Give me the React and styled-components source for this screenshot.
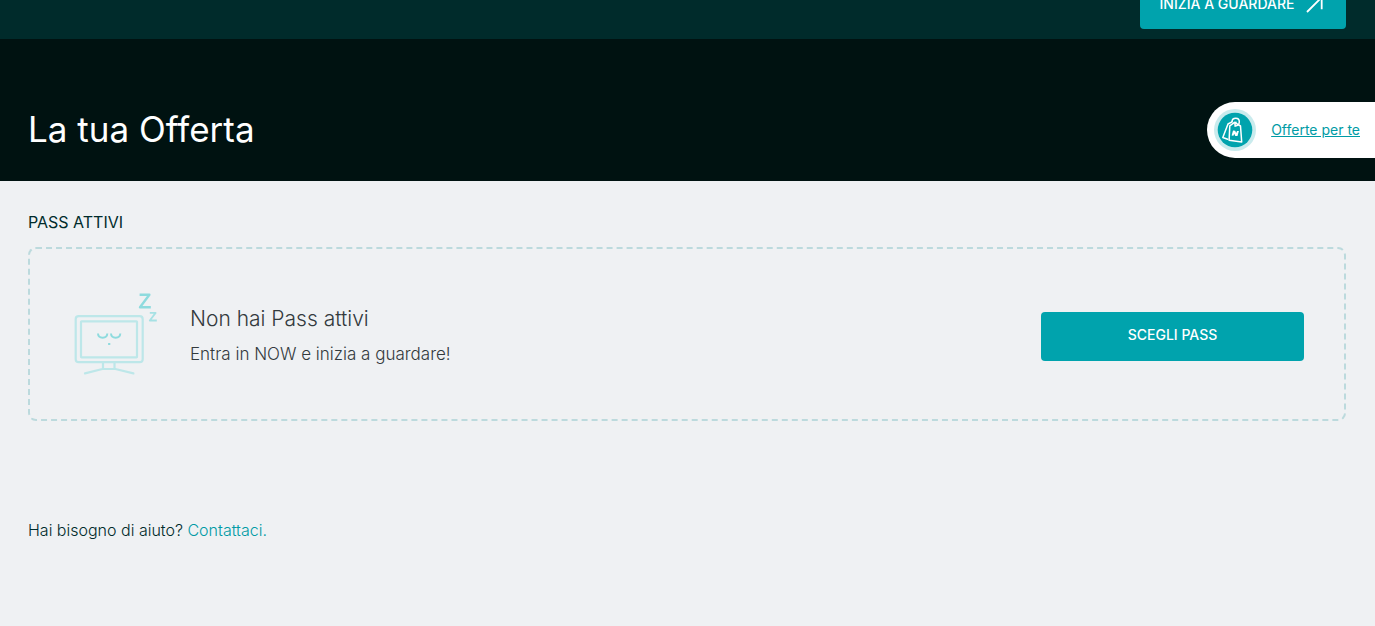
import React from "react";
import styled, { createGlobalStyle, css } from "styled-components";

const GlobalStyle = createGlobalStyle`
  *, *::before, *::after { box-sizing: border-box; }
  body {
    margin: 0;
    background: #eff1f3;
    color: #002b2b;
    font-family: Inter, "Noto Sans", sans-serif;
    font-size: 16px;
    line-height: 24px;
  }
  h1, h2, h3, p { margin: 0; }
`;

const TopBar = styled.header`
  display: flex;
  justify-content: flex-end;
  align-items: flex-end;
  height: 39px;
  padding: 0 29px 10px 28px;
  background: #002b2b;
  overflow: hidden;
`;

const Button = styled.button`
  display: flex;
  flex: none;
  align-items: center;
  justify-content: center;
  gap: 12px;
  width: ${({ $wide }) => ($wide ? "263px" : "206px")};
  height: 49px;
  padding: 0 8px 2px;
  border: 0;
  border-radius: 4px;
  background: #00a3ad;
  color: #fff;
  font: 500 14px/20px Inter, "Noto Sans", sans-serif;
  white-space: nowrap;
  cursor: pointer;
`;

const Hero = styled.section`
  padding: 68px 29px 30px 28px;
  background: #001211;
`;

const Title = styled.h1`
  color: #fff;
  font-size: 35px;
  font-weight: 400;
  line-height: 44px;
`;

const Content = styled.main`
  padding: 30px 29px 48px 28px;
`;

const SectionTitle = styled.h2`
  margin-bottom: 14px;
  font-size: 16px;
  font-weight: 400;
  line-height: 22px;
`;

const PassCard = styled.section`
  display: flex;
  align-items: center;
  gap: 32px;
  min-height: 174px;
  padding: 42px 40px 38px;
  border: 2px dashed #bcdadd;
  border-radius: 8px;
`;

const Illustration = styled.svg`
  flex: none;
  width: 88px;
  height: 90px;
`;

const Message = styled.div`
  flex: 1;
  color: #333a3d;
  font-size: 17px;
  font-weight: 300;
`;

const MessageTitle = styled.h3`
  margin-bottom: 10px;
  font-size: 21px;
  font-weight: 300;
  line-height: 26px;
`;

const Help = styled.p`
  margin-top: 97px;
  font-weight: 300;
`;

const Link = styled.a`
  color: #009ba5;
  text-decoration: none;
  ${({ $small }) =>
    $small &&
    css`
      font-size: 14px;
      line-height: 20px;
      text-decoration: underline;
    `}
`;

const OfferTab = styled.aside`
  position: fixed;
  top: 102px;
  right: 0;
  display: flex;
  align-items: center;
  gap: 15px;
  height: 56px;
  padding: 0 15px 0 7px;
  border-radius: 28px 0 0 28px;
  background: #fff;
`;

const OfferBadge = styled.svg`
  flex: none;
  width: 42px;
  height: 42px;
`;

function ArrowIcon() {
  return (
    <svg width="20" height="18" viewBox="0 0 20 18" fill="none" stroke="#fff" strokeWidth="1.8" aria-hidden="true">
      <path d="M1 17 15.200 2.800M4 2.200h11.700v12" />
    </svg>
  );
}

function SleepingTv() {
  return (
    <Illustration viewBox="0 2 88 90" fill="none" aria-hidden="true">
      <g stroke="#bde7e9" strokeWidth="2.2" strokeLinecap="round" strokeLinejoin="round">
        <rect x="5.7" y="27.2" width="67" height="46" rx="3" />
        <rect x="11" y="32.4" width="56" height="36" rx="0.6" />
        <path d="M33 74v6M44.5 74v6M15 84.4 32.4 80h13L63.4 84.4" />
      </g>
      <g stroke="#8edbde" strokeWidth="2">
        <path d="M28 44.5c.3 5.600 9 5.600 9.300 0M41 44.500c.3 5.600 9 5.600 9.300 0" />
        <path d="M38.100 55h2.200" />
      </g>
      <path d="M69.600 5.800h9.800L70 18.200h10.800" stroke="#8edbde" strokeWidth="2.400" strokeLinejoin="round" />
      <path d="M79.800 23.900h5.800L79.800 31.500h7" stroke="#a6e1e4" strokeWidth="1.800" strokeLinejoin="round" />
    </Illustration>
  );
}

function TagsBadge() {
  return (
    <OfferBadge viewBox="0 0 42 42" fill="none" aria-hidden="true">
      <circle cx="21" cy="21" r="21" fill="#c9ebed" />
      <circle cx="21" cy="21" r="17.300" fill="#00a3ad" />
      <g stroke="#fff" strokeWidth="1.500" strokeLinejoin="round" strokeLinecap="round">
        <path d="M15.800 16.800 20.500 13.300l6 3.700 1.200 16-12.600-1.700z" />
        <path d="M18 12.800l-4 2.200-5.200 13.500 4.900 1.800" />
        <path d="M20.800 16.900c2.600.5 4.500-1.400 4.500-4 0-2-1.500-3.600-3.500-3.600-2.100 0-3.800 1.400-3.800 3.500" />
        <path d="M21.600 16.400c-1.200-1-.9-2.700.4-3.200" />
      </g>
      <path d="M17.600 26.600l1.400-5 2.200.2 1 2.100.8-2 1.900.1-1.400 5-2.200-.1-1.100-2.200-.8 2z" fill="#fff" />
    </OfferBadge>
  );
}

export default function App() {
  return (
    <>
      <GlobalStyle />
      <TopBar>
        <Button type="button">
          INIZIA A GUARDARE
          <ArrowIcon />
        </Button>
      </TopBar>
      <Hero>
        <Title>La tua Offerta</Title>
      </Hero>
      <Content>
        <SectionTitle>PASS ATTIVI</SectionTitle>
        <PassCard>
          <SleepingTv />
          <Message>
            <MessageTitle>Non hai Pass attivi</MessageTitle>
            <p>Entra in NOW e inizia a guardare!</p>
          </Message>
          <Button type="button" $wide>
            SCEGLI PASS
          </Button>
        </PassCard>
        <Help>
          Hai bisogno di aiuto? <Link href="#contatti">Contattaci.</Link>
        </Help>
      </Content>
      <OfferTab>
        <TagsBadge />
        <Link href="#offerte" $small>
          Offerte per te
        </Link>
      </OfferTab>
    </>
  );
}
